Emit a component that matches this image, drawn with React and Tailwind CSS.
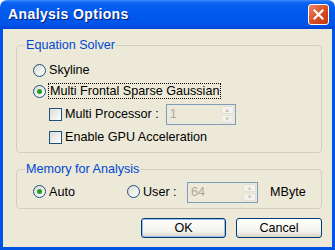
import React from "react";

function Radio({ checked }) {
  return (
    <span className="relative inline-block w-[13px] h-[13px] shrink-0 rounded-full border border-[#1c5180] bg-[linear-gradient(135deg,#dcdbd5,#ffffff)]">
      {checked && (
        <span className="absolute left-[3px] top-[3px] w-[5px] h-[5px] rounded-full bg-[#21a121]" />
      )}
    </span>
  );
}

function Check() {
  return (
    <span className="inline-block w-[13px] h-[13px] shrink-0 border border-[#1c5180] bg-[linear-gradient(135deg,#dcdbd5,#ffffff)]" />
  );
}

function Spin({ value, width }) {
  return (
    <div className={`flex items-stretch h-[21px] ${width} border border-[#7f9db9] bg-[#ece9d8]`}>
      <div className="flex-1 pl-[3px] text-[#aca899] leading-[19px]">{value}</div>
      <div className="flex flex-col w-[15px] p-[1px] gap-[1px]">
        <div className="flex-1 flex items-center justify-center rounded-[2px] border border-[#e3e1d7] bg-[#f3f2ec] text-[#c9c7ba] text-[6px] leading-none">▲</div>
        <div className="flex-1 flex items-center justify-center rounded-[2px] border border-[#e3e1d7] bg-[#f3f2ec] text-[#c9c7ba] text-[6px] leading-none">▼</div>
      </div>
    </div>
  );
}

export default function App() {
  return (
    <div className="w-[335px] h-[250px] bg-white font-['Liberation_Sans',Arial,sans-serif] text-[12.6px] text-black">
      <div className="flex flex-col w-full h-full rounded-t-[7px] overflow-hidden">
        {/* title bar */}
        <div className="flex items-center justify-between h-[29px] pl-[8px] pr-[6px] bg-[linear-gradient(180deg,#3d8cfb_0%,#0a62f0_10%,#0058ee_45%,#0055e8_85%,#0042d6_100%)]">
          <span className="text-white font-bold text-[14px] tracking-[0.4px] [text-shadow:1px_1px_0_#0a1f73]">Analysis Options</span>
          <div className="flex items-center justify-center w-[21px] h-[21px] rounded-[3px] border border-white bg-[linear-gradient(135deg,#ec8a68,#db4f24_50%,#c43710)]">
            <svg width="11" height="11" viewBox="0 0 11 11">
              <path d="M1.5 1.5 L9.5 9.5 M9.5 1.5 L1.5 9.5" stroke="white" strokeWidth="2.2" strokeLinecap="square" />
            </svg>
          </div>
        </div>

        {/* body */}
        <div className="flex-1 flex flex-col bg-[#ece9d8] border-x-[3px] border-b-[3px] border-[#0054e3] pl-[13px] pr-[10px]">
          <fieldset className="mt-[9px] border border-[#d0d0bf] rounded-[4px] pl-[16px] pb-[5px]">
            <legend className="ml-[-8px] px-[1px] text-[#0046d5] leading-[15px]">Equation Solver</legend>
            <div className="flex items-center h-[20px] mt-[7px] gap-[3px]">
              <Radio />
              <span>Skyline</span>
            </div>
            <div className="flex items-center h-[20px] mt-[1px] gap-[2px]">
              <Radio checked />
              <span className="border border-dotted border-black px-[1px] leading-[14px]">Multi Frontal Sparse Gaussian</span>
            </div>
            <div className="flex items-center h-[22px] mt-[2px] pl-[16px] gap-[3px]">
              <Check />
              <span>Multi Processor :</span>
              <div className="ml-[4px]">
                <Spin value="1" width="w-[70px]" />
              </div>
            </div>
            <div className="flex items-center h-[20px] mt-[2px] pl-[16px] gap-[3px]">
              <Check />
              <span>Enable GPU Acceleration</span>
            </div>
          </fieldset>

          <fieldset className="mt-[9px] border border-[#d0d0bf] rounded-[4px] pl-[16px] pb-[5px]">
            <legend className="ml-[-8px] px-[1px] text-[#0046d5] leading-[15px]">Memory for Analysis</legend>
            <div className="flex items-center h-[22px] mt-[4px]">
              <div className="flex items-center gap-[3px] w-[94px]">
                <Radio checked />
                <span>Auto</span>
              </div>
              <div className="flex items-center gap-[3px] w-[60px]">
                <Radio />
                <span>User :</span>
              </div>
              <Spin value="64" width="w-[71px]" />
              <span className="ml-[12px]">MByte</span>
            </div>
          </fieldset>

          <div className="flex justify-end gap-[10px] mt-[9px]">
            <button className="w-[85px] h-[20px] rounded-[3px] border border-[#003c74] bg-[linear-gradient(180deg,#ffffff,#f3f2ec_70%,#d8d3c6)] shadow-[inset_0_0_0_1px_#9cbbf0] leading-[18px]">OK</button>
            <button className="w-[86px] h-[20px] rounded-[3px] border border-[#003c74] bg-[linear-gradient(180deg,#ffffff,#f3f2ec_70%,#d8d3c6)] leading-[18px]">Cancel</button>
          </div>
        </div>
      </div>
    </div>
  );
}
